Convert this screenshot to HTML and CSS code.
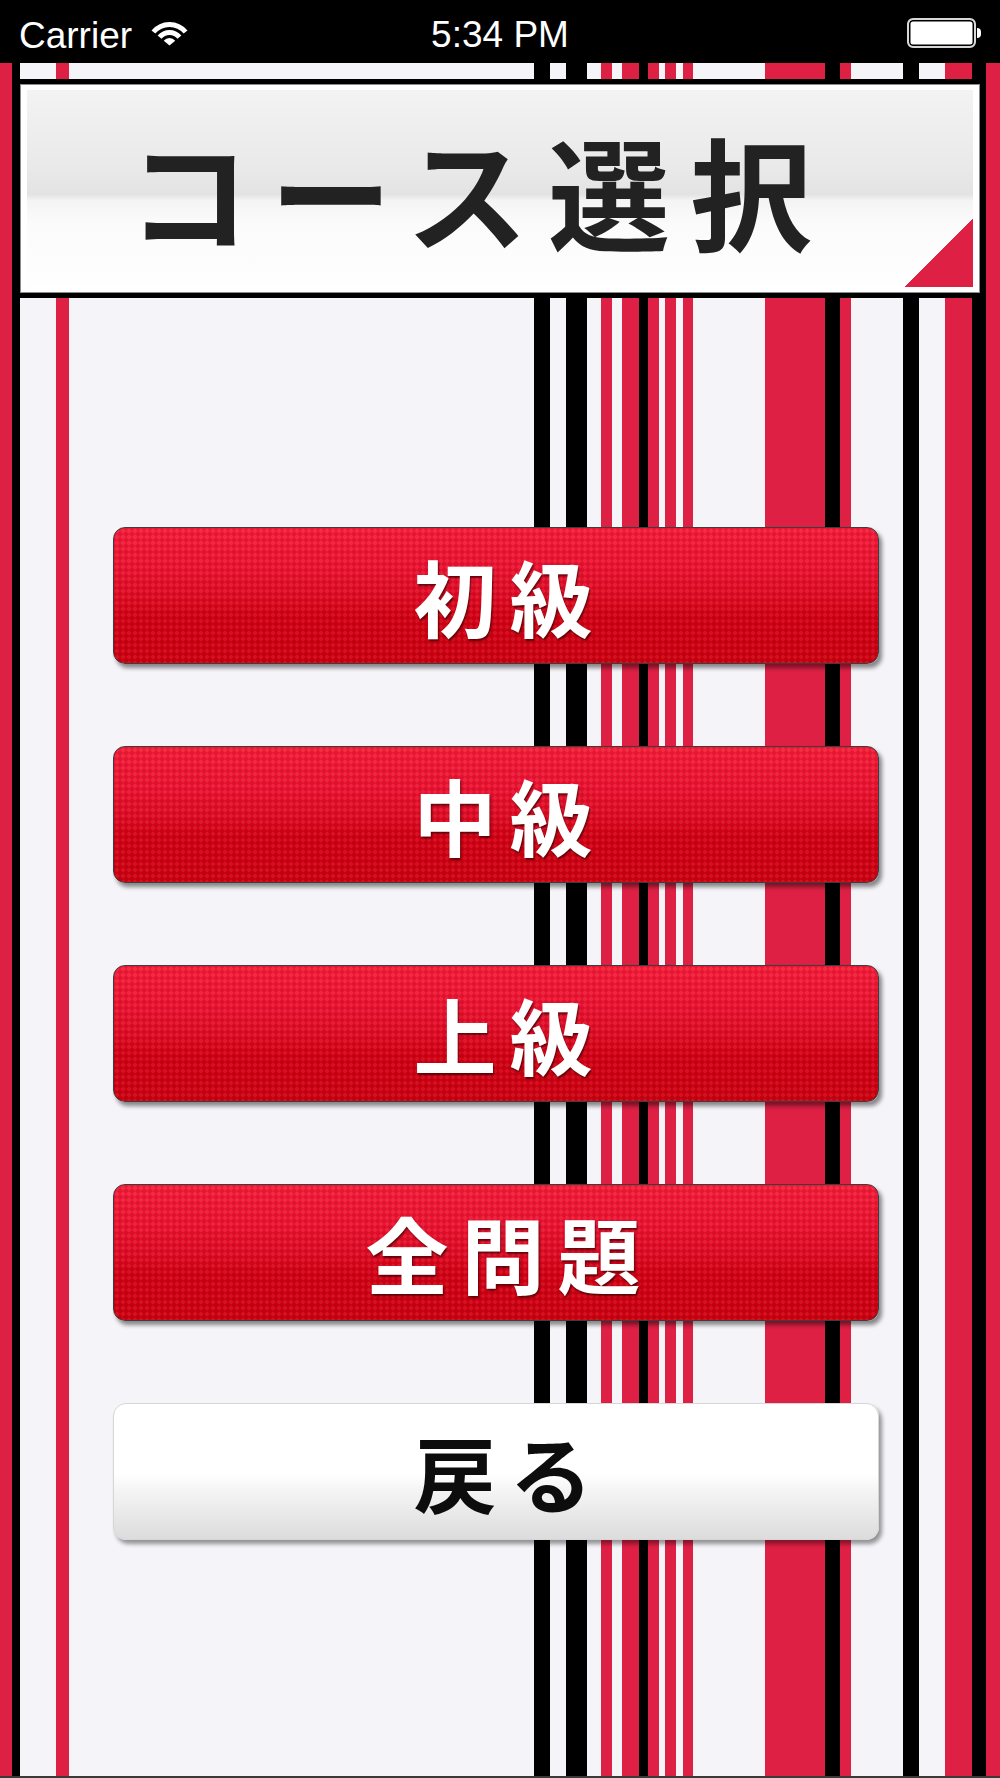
FILE: index.html
```html
<!DOCTYPE html>
<html lang="ja">
<head>
<meta charset="utf-8">
<title>コース選択</title>
<link rel="stylesheet" href="styles.css">
</head>
<body>
<div class="status">
  <div class="status-left">
    <span class="carrier">Carrier</span>
    <svg class="wifi" width="39" height="24" viewBox="0 0 39 24">
      <path d="M19.5 23.5 L13.76 18.68 A7.5 7.5 0 0 1 25.24 18.68 Z" fill="#fff"/>
      <path d="M7.63 13.54 A15.5 15.5 0 0 1 31.37 13.54 L27.54 16.75 A10.5 10.5 0 0 0 11.46 16.75 Z" fill="#fff"/>
      <path d="M1.5 8.39 A23.5 23.5 0 0 1 37.5 8.39 L33.67 11.61 A18.5 18.5 0 0 0 5.33 11.61 Z" fill="#fff"/>
    </svg>
  </div>
  <div class="time">5:34 PM</div>
  <div class="status-right">
    <span class="batt-body"></span><span class="batt-nub"></span>
  </div>
</div>

<header class="title-box">
  <div class="title-inner">
    <h1 class="title">コース選択</h1>
  </div>
</header>

<main class="menu">
  <button class="btn btn-red">初級</button>
  <button class="btn btn-red">中級</button>
  <button class="btn btn-red">上級</button>
  <button class="btn btn-red">全問題</button>
  <button class="btn btn-white">戻る</button>
</main>
</body>
</html>
```

FILE: styles.css
```css
html, body {
  margin: 0;
  padding: 0;
}

body {
  width: 1000px;
  height: 1778px;
  box-sizing: border-box;
  border-bottom: 2px solid #3a3a3a;
  overflow: hidden;
  font-family: "Liberation Sans", Arial, sans-serif;
  background: linear-gradient(to right,
    #de2044 0 12px, #000 12px 20px, #f4f4f9 20px 56px, #de2044 56px 69px,
    #f4f4f9 69px 534px, #000 534px 550px, #f4f4f9 550px 566px, #000 566px 587px,
    #f4f4f9 587px 601px, #de2044 601px 612px, #f4f4f9 612px 622px, #de2044 622px 639px,
    #000 639px 648px, #de2044 648px 659px, #f4f4f9 659px 665px, #de2044 665px 676px,
    #f4f4f9 676px 683px, #de2044 683px 693px, #f4f4f9 693px 765px, #de2044 765px 825px,
    #000 825px 840px, #de2044 840px 851px, #f4f4f9 851px 903px, #000 903px 919px,
    #f4f4f9 919px 945px, #de2044 945px 972px, #000 972px 986px, #de2044 986px 1000px);
}

/* status bar */
.status {
  height: 63px;
  box-sizing: border-box;
  background: #000;
  color: #fff;
  display: grid;
  grid-template-columns: 1fr auto 1fr;
  align-items: center;
  padding: 3px 19px 0 19px;
  font-size: 37px;
}

.status-left {
  display: flex;
  align-items: center;
  gap: 18px;
}

.carrier {
  line-height: 1;
  padding-top: 4px;
}

.wifi {
  display: block;
  margin-top: 2px;
}

.time {
  line-height: 1;
  text-align: center;
  padding-top: 2px;
}

.status-right {
  display: flex;
  align-items: center;
  justify-content: flex-end;
}

.batt-body {
  display: block;
  width: 65px;
  height: 26px;
  border: 2px solid #d8d8d8;
  border-radius: 6px;
  background: #fff;
  box-shadow: inset 0 0 0 1.5px #000;
}

.batt-nub {
  display: block;
  width: 4px;
  height: 10px;
  margin-left: 1px;
  background: #fff;
  border-radius: 0 5px 5px 0;
}

/* title */
.title-box {
  margin: 16px 15px 0;
  height: 219px;
  box-sizing: border-box;
  border: 5px solid #000;
  background: #fff;
  padding: 6px 7px;
  box-shadow: inset 0 0 0 1px #8c8c8c;
}

.title-inner {
  height: 197px;
  background:
    linear-gradient(135deg, transparent 50%, #de2044 50%) right bottom / 68px 68px no-repeat,
    linear-gradient(#f3f3f3 0%, #e9e9e9 40%, #e3e3e3 53%, #f4f4f4 56%, #fbfbfb 68%, #fefefe 100%);
}

.title {
  margin: 0;
  padding-right: 40px;
  font-family: "Noto Sans CJK JP", "Noto Sans CJK SC", sans-serif;
  font-weight: 700;
  font-size: 122px;
  line-height: 197px;
  letter-spacing: 20px;
  text-align: center;
  color: #222;
}

/* menu buttons */
.menu {
  display: flex;
  flex-direction: column;
  gap: 82px;
  width: 766px;
  margin: 229px 0 0 113px;
}

.btn {
  display: block;
  height: 137px;
  box-sizing: border-box;
  border-radius: 12px;
  padding: 0 0 0 27px;
  margin: 0;
  font-family: "Noto Sans CJK JP", "Noto Sans CJK SC", sans-serif;
  font-weight: 700;
  font-size: 83px;
  line-height: 1;
  letter-spacing: 13px;
  text-align: center;
  cursor: pointer;
}

.btn-red {
  color: #fff;
  border: 1.5px solid #3d3d3d;
  text-shadow: 1px 2px 2px rgba(60, 0, 0, 0.75);
  background:
    radial-gradient(circle, rgba(255, 255, 255, 0.07) 38%, transparent 42%) 0 0 / 6px 6px,
    radial-gradient(circle, rgba(0, 0, 0, 0.07) 38%, transparent 42%) 3px 3px / 6px 6px,
    linear-gradient(#f31c38 0%, #ea1230 30%, #de0a22 52%, #d20014 66%, #cc0010 100%);
  box-shadow: 3px 4px 4px rgba(0, 0, 0, 0.45);
}

.btn-white {
  color: #0d0d0d;
  border: 1px solid #d6d6d6;
  border-radius: 13px;
  background: linear-gradient(#ffffff 0%, #ffffff 52%, #f6f6f6 62%, #e6e6e6 85%, #dcdcdc 100%);
  box-shadow: 3px 4px 4px rgba(0, 0, 0, 0.4);
}
```
